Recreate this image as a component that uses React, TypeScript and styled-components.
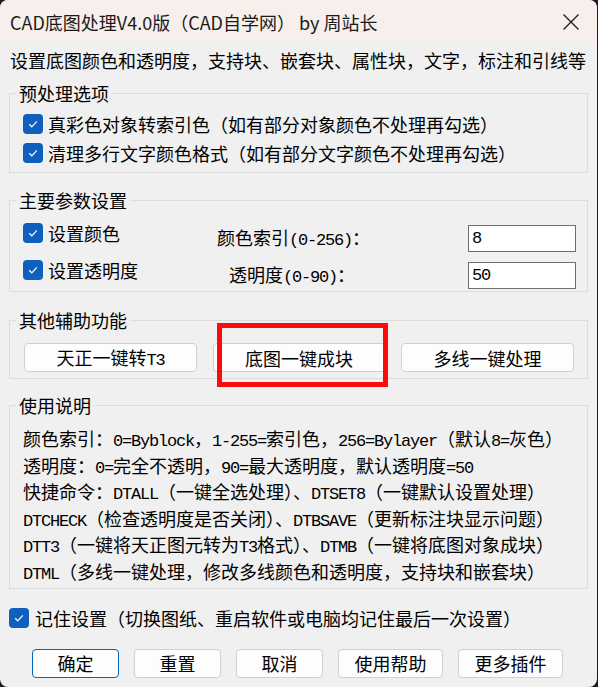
import React from "react";
import styled, { createGlobalStyle } from "styled-components";

const GlobalStyle = createGlobalStyle`
  html, body {
    margin: 0;
    padding: 0;
    background: #1c1c1c;
  }
  body {
    font-family: "Noto Sans CJK SC", sans-serif;
  }
`;

const Window = styled.div`
  position: relative;
  width: 597px;
  height: 687px;
  background: #f0f0f0;
  border-radius: 8px;
  overflow: hidden;
  display: flex;
  flex-direction: column;
  color: #000;
  font-family: "Noto Sans CJK SC", sans-serif;
  font-size: 18px;
`;

const TitleBar = styled.div`
  height: 43px;
  flex: none;
  background: #f6efeb;
  display: flex;
  align-items: center;
  justify-content: space-between;
  padding-left: 10px;
`;

const TitleText = styled.div`
  font-size: 18px;
  color: #1a1a1a;
  white-space: nowrap;
`;

const CloseBtn = styled.div`
  width: 46px;
  height: 43px;
  display: flex;
  align-items: center;
  justify-content: center;
  margin-right: 3px;
`;

const Desc = styled.div`
  margin-top: 7px;
  padding-left: 10px;
  line-height: 20px;
  white-space: nowrap;
`;

const Group = styled.fieldset<{ $top: number }>`
  margin: ${(p) => p.$top}px 9px 0;
  padding: 0;
  border: 1px solid #dcdcdc;
  min-width: 0;
`;

const Legend = styled.legend`
  margin-left: 6px;
  padding: 0 3px;
  line-height: 20px;
  font-size: 18px;
`;

const GroupBody = styled.div<{ $pad: string; $gap?: number }>`
  padding: ${(p) => p.$pad};
  display: flex;
  flex-direction: column;
  gap: ${(p) => p.$gap ?? 0}px;
`;

const CheckRow = styled.label`
  display: flex;
  align-items: center;
  gap: 5px;
  height: 20px;
  line-height: 20px;
  white-space: nowrap;
`;

const Box = styled.span`
  width: 20px;
  height: 20px;
  flex: none;
  border-radius: 4px;
  background: #0f5fbd;
  display: flex;
  align-items: center;
  justify-content: center;
`;

const ParamRow = styled.div`
  display: grid;
  grid-template-columns: 194px 150px 1fr;
  height: 29px;
  .check {
    align-self: start;
  }
`;

const ParamLabel = styled.div`
  align-self: center;
  text-align: center;
  white-space: nowrap;
  line-height: 20px;
`;

const Field = styled.div`
  align-self: end;
  justify-self: end;
  width: 108px;
  height: 27px;
  box-sizing: border-box;
  background: #fff;
  border: 1px solid #6e6e6e;
  padding-left: 3px;
  display: flex;
  align-items: center;
`;

const ButtonGrid = styled.div`
  display: grid;
  grid-template-columns: repeat(3, 173px);
  justify-content: space-between;
  padding: 13px 13px 6px 14px;
`;

const Button = styled.button<{ $w?: number; $primary?: boolean }>`
  width: ${(p) => (p.$w ? `${p.$w}px` : "auto")};
  height: 29px;
  box-sizing: border-box;
  background: #fdfdfd;
  border: 1px solid ${(p) => (p.$primary ? "#0067c0" : "#d0d0d0")};
  border-radius: 4px;
  font-family: "Noto Sans CJK SC", sans-serif;
  font-size: 18px;
  color: #000;
  padding: 0;
  line-height: 20px;
`;

const Notes = styled.div`
  padding: 10px 0 3px 13px;
  line-height: 26.6px;
  white-space: nowrap;
`;

const Remember = styled(CheckRow)`
  margin-top: 19px;
  padding-left: 9px;
  gap: 6px;
`;

const Footer = styled.div`
  display: flex;
  gap: 15px;
  margin-top: 21px;
  padding-left: 32px;
`;

const Highlight = styled.div`
  position: absolute;
  left: 217px;
  top: 323px;
  width: 171px;
  height: 64px;
  box-sizing: border-box;
  border: 5px solid #ff0a0a;
  pointer-events: none;
`;

const Latin = styled.span`
  font-family: "Liberation Mono", monospace;
  font-size: 17px;
  letter-spacing: -1.2px;
  line-height: 1;
`;

const T = ({ s }: { s: string }) => (
  <>
    {s
      .split(/([\x20-\x7e]+)/)
      .map((part, i) =>
        /[\x20-\x7e]/.test(part) ? <Latin key={i}>{part}</Latin> : part
      )}
  </>
);

const Check = () => (
  <Box>
    <svg width="12" height="12" viewBox="0 0 12 12">
      <path d="M2.2 6.3 L4.8 8.8 L9.8 3.4" fill="none" stroke="#fff" strokeWidth="1.2" />
    </svg>
  </Box>
);

const notes = [
  "颜色索引：0=Byblock，1-255=索引色，256=Bylayer（默认8=灰色）",
  "透明度：0=完全不透明，90=最大透明度，默认透明度=50",
  "快捷命令：DTALL（一键全选处理）、DTSET8（一键默认设置处理）",
  "DTCHECK（检查透明度是否关闭）、DTBSAVE（更新标注块显示问题）",
  "DTT3（一键将天正图元转为T3格式）、DTMB（一键将底图对象成块）",
  "DTML（多线一键处理，修改多线颜色和透明度，支持块和嵌套块）",
];

export default function App() {
  return (
    <>
      <GlobalStyle />
      <Window>
        <TitleBar>
          <TitleText>CAD底图处理V4.0版（CAD自学网） by 周站长</TitleText>
          <CloseBtn>
            <svg width="18" height="18" viewBox="0 0 18 18">
              <path d="M1.5 1.5 L16.5 16.5 M16.5 1.5 L1.5 16.5" stroke="#1a1a1a" strokeWidth="1.3" />
            </svg>
          </CloseBtn>
        </TitleBar>

        <Desc>设置底图颜色和透明度，支持块、嵌套块、属性块，文字，标注和引线等</Desc>

        <Group $top={13}>
          <Legend>预处理选项</Legend>
          <GroupBody $pad="11px 0 9px 13px" $gap={9}>
            <CheckRow>
              <Check />
              真彩色对象转索引色（如有部分对象颜色不处理再勾选）
            </CheckRow>
            <CheckRow>
              <Check />
              清理多行文字颜色格式（如有部分文字颜色不处理再勾选）
            </CheckRow>
          </GroupBody>
        </Group>

        <Group $top={17}>
          <Legend>主要参数设置</Legend>
          <GroupBody $pad="13px 11px 2px 13px" $gap={8}>
            <ParamRow>
              <CheckRow className="check">
                <Check />
                设置颜色
              </CheckRow>
              <ParamLabel>
                <T s="颜色索引(0-256)：" />
              </ParamLabel>
              <Field>
                <T s="8" />
              </Field>
            </ParamRow>
            <ParamRow>
              <CheckRow className="check">
                <Check />
                设置透明度
              </CheckRow>
              <ParamLabel>
                <T s="透明度(0-90)：" />
              </ParamLabel>
              <Field>
                <T s="50" />
              </Field>
            </ParamRow>
          </GroupBody>
        </Group>

        <Group $top={18}>
          <Legend>其他辅助功能</Legend>
          <ButtonGrid>
            <Button>
              <T s="天正一键转T3" />
            </Button>
            <Button>底图一键成块</Button>
            <Button>多线一键处理</Button>
          </ButtonGrid>
        </Group>

        <Group $top={16}>
          <Legend>使用说明</Legend>
          <Notes>
            {notes.map((n) => (
              <div key={n}>
                <T s={n} />
              </div>
            ))}
          </Notes>
        </Group>

        <Remember>
          <Check />
          记住设置（切换图纸、重启软件或电脑均记住最后一次设置）
        </Remember>

        <Footer>
          <Button $w={87} $primary>
            确定
          </Button>
          <Button $w={87}>重置</Button>
          <Button $w={87}>取消</Button>
          <Button $w={105}>使用帮助</Button>
          <Button $w={105}>更多插件</Button>
        </Footer>

        <Highlight />
      </Window>
    </>
  );
}
